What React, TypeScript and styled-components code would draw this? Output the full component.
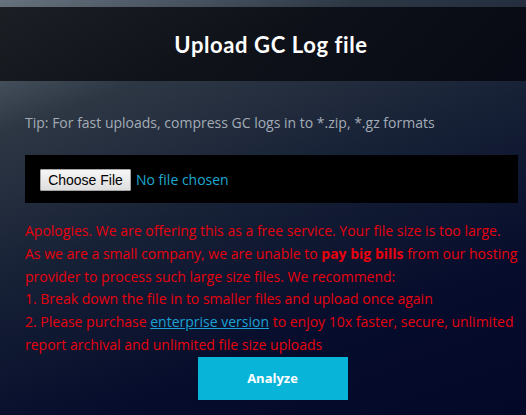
import React from "react";
import styled, { createGlobalStyle } from "styled-components";

const Global = createGlobalStyle`
  html, body { margin: 0; padding: 0; }
  body {
    width: 526px;
    height: 415px;
    overflow: hidden;
    font-family: "Open Sans", "DejaVu Sans", sans-serif;
  }
`;

const Page = styled.div`
  width: 526px;
  height: 415px;
  display: flex;
  flex-direction: column;
  padding-top: 7px;
  box-sizing: border-box;
  background: linear-gradient(160deg, #66727e 0%, #2d3744 22%, #141e34 50%, #060c2c 75%, #040828 100%);
`;

const Header = styled.header`
  height: 74px;
  display: flex;
  align-items: center;
  justify-content: center;
  background: linear-gradient(90deg, rgba(12, 14, 18, 0.82) 0%, rgba(4, 6, 14, 0.85) 100%);
`;

const Title = styled.h1`
  margin: 0 0 0 16px;
  font-family: "Lato", "Open Sans", sans-serif;
  font-weight: 700;
  font-size: 22px;
  letter-spacing: 0.6px;
  color: #ffffff;
`;

const Body = styled.main`
  display: flex;
  flex-direction: column;
  padding: 32px 8px 0 25px;
`;

const Tip = styled.p`
  margin: 0;
  font-size: 14px;
  line-height: 20px;
  color: #a3acb6;
`;

const FileBox = styled.div`
  margin-top: 22px;
  height: 48px;
  background: #000000;
  display: flex;
  align-items: center;
  padding-left: 15px;
  gap: 5px;
`;

const ChooseButton = styled.button`
  height: 22px;
  width: 91px;
  padding: 0;
  font-family: "Liberation Sans", Arial, sans-serif;
  font-size: 14px;
  color: #000;
  background: linear-gradient(#f6f6f6, #dedede);
  border: 1px solid #a5a5a5;
  border-radius: 1px;
  margin-top: 1px;
`;

const NoFile = styled.span`
  font-size: 14px;
  color: #1ea9d2;
`;

const Warning = styled.div`
  margin-top: 17px;
  font-size: 14px;
  line-height: 22.8px;
  color: #e8000e;
`;

const Line = styled.div``;

const Strong = styled.b`
  font-weight: 700;
`;

const Link = styled.a`
  color: #1aa2d4;
  text-decoration: underline;
`;

const Actions = styled.div`
  display: flex;
  justify-content: center;
  padding-left: 2px;
`;

const Analyze = styled.button`
  width: 150px;
  height: 43px;
  border: none;
  background: #08b4d8;
  color: #fff;
  font-family: "Open Sans", sans-serif;
  font-weight: 700;
  font-size: 13px;
`;

export default function App() {
  return (
    <>
      <Global />
      <Page>
        <Header>
          <Title>Upload GC Log file</Title>
        </Header>
        <Body>
          <Tip>Tip: For fast uploads, compress GC logs in to *.zip, *.gz formats</Tip>
          <FileBox>
            <ChooseButton>Choose File</ChooseButton>
            <NoFile>No file chosen</NoFile>
          </FileBox>
          <Warning>
            <Line>
              Apologies. We are offering this as a free service. Your file size is too large. As we are a small company, we are unable to <Strong>pay big bills</Strong> from our hosting provider to process such large size files. We recommend:
            </Line>
            <Line>1. Break down the file in to smaller files and upload once again</Line>
            <Line>
              2. Please purchase <Link href="#">enterprise version</Link> to enjoy 10x faster, secure, unlimited report archival and unlimited file size uploads
            </Line>
          </Warning>
          <Actions>
            <Analyze>Analyze</Analyze>
          </Actions>
        </Body>
      </Page>
    </>
  );
}
